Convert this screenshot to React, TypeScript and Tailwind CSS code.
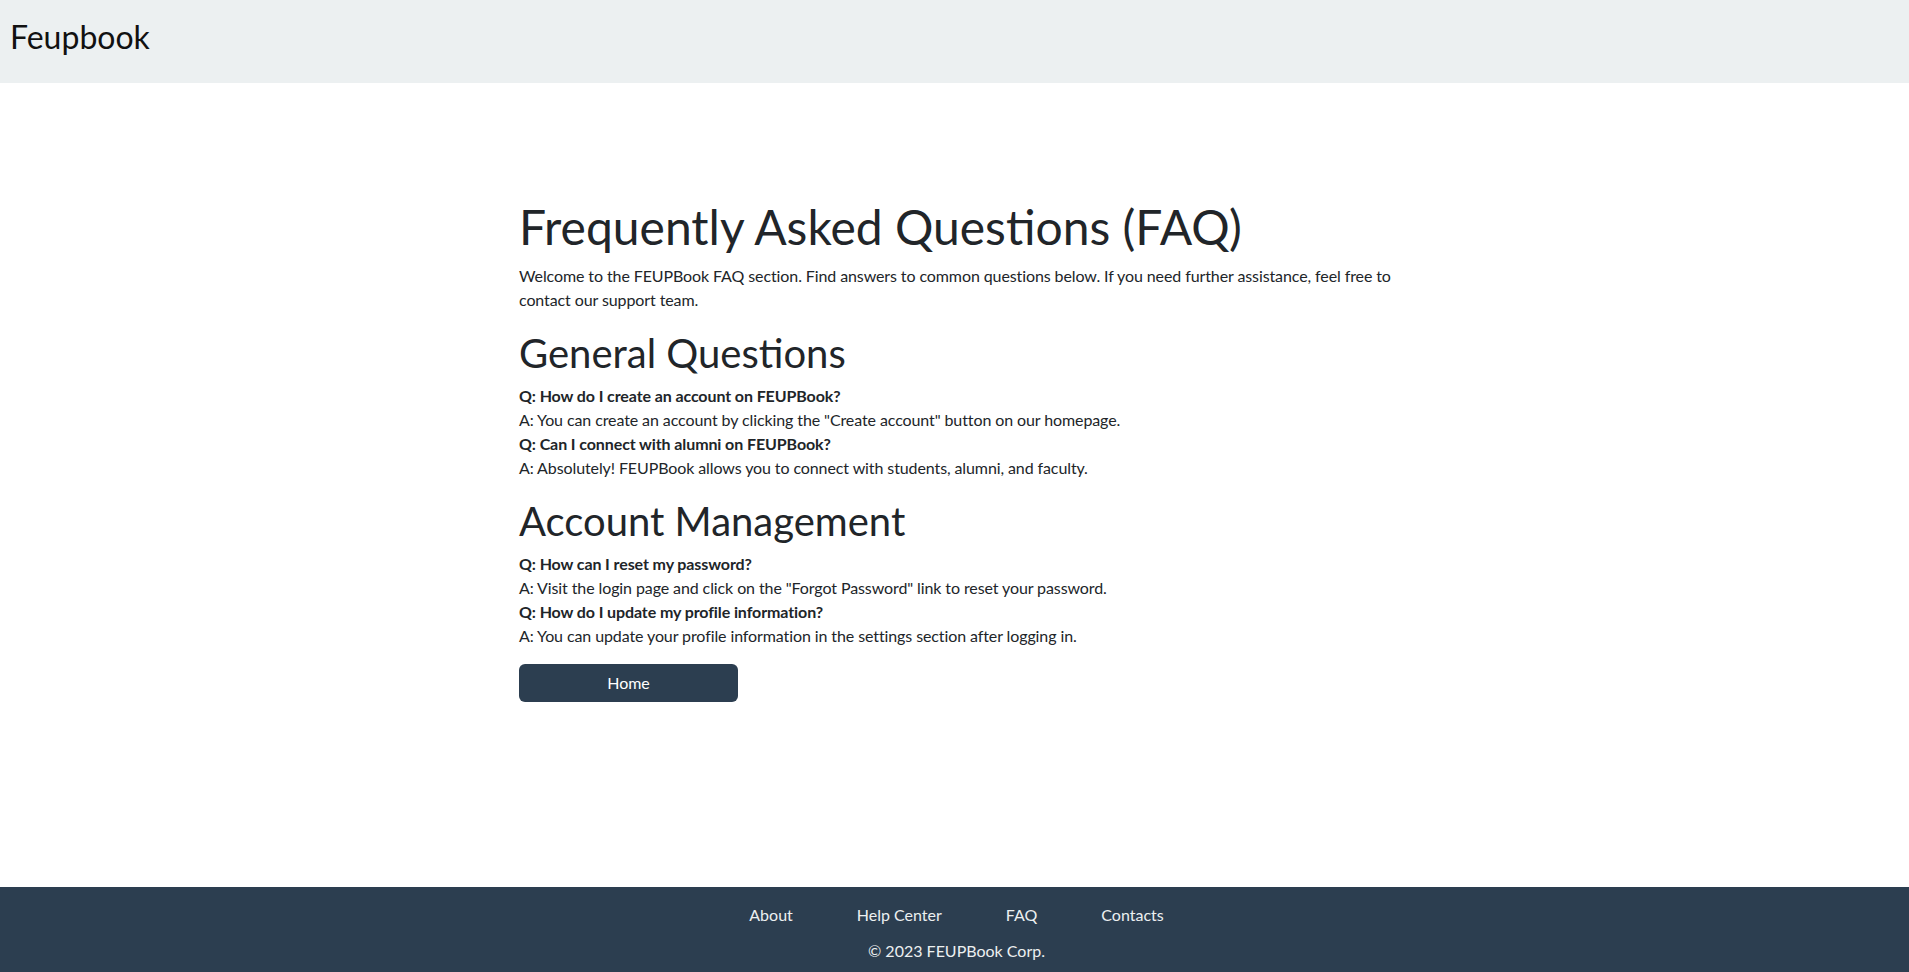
import React from "react";

const font = { fontFamily: "Lato, 'Open Sans', sans-serif" };

function QA({ q, a }: { q: string; a: string }) {
  return (
    <>
      <p className="font-bold leading-6">{q}</p>
      <p className="leading-6">{a}</p>
    </>
  );
}

export default function App() {
  return (
    <div
      className="min-h-screen flex flex-col bg-white text-[#212529] text-[16px]"
      style={font}
    >
      <header className="h-[83px] bg-[#ecf0f1] px-[10px] pt-[13px] shrink-0">
        <span className="text-[32px] leading-[48px] text-[#111]">Feupbook</span>
      </header>

      <main className="flex-1">
        <div className="w-[871px] mx-auto pt-[115px] tracking-[-0.1px]">
          <h1 className="text-[48px] leading-[1.2] mb-[8px] tracking-normal">
            Frequently Asked Questions (FAQ)
          </h1>
          <p className="leading-6 mb-[17px] w-[890px]">
            Welcome to the FEUPBook FAQ section. Find answers to common questions below. If you
            need further assistance, feel free to contact our support team.
          </p>

          <h2 className="text-[40px] leading-[1.2] mb-[7px] tracking-normal">General Questions</h2>
          <div className="mb-[17px]">
            <QA
              q="Q: How do I create an account on FEUPBook?"
              a={'A: You can create an account by clicking the "Create account" button on our homepage.'}
            />
            <QA
              q="Q: Can I connect with alumni on FEUPBook?"
              a="A: Absolutely! FEUPBook allows you to connect with students, alumni, and faculty."
            />
          </div>

          <h2 className="text-[40px] leading-[1.2] mb-[7px] tracking-normal">Account Management</h2>
          <div>
            <QA
              q="Q: How can I reset my password?"
              a={'A: Visit the login page and click on the "Forgot Password" link to reset your password.'}
            />
            <QA
              q="Q: How do I update my profile information?"
              a="A: You can update your profile information in the settings section after logging in."
            />
          </div>

          <button className="mt-[16px] w-[219px] h-[38px] rounded-md bg-[#2c3e50] text-white text-[16px] leading-6 tracking-normal">
            Home
          </button>
        </div>
      </main>

      <footer className="bg-[#2c3e50] text-[#ecf0f1] pt-[16px] pb-[9px] pl-[4px] shrink-0">
        <nav className="flex justify-center">
          <a className="mx-8 leading-6" href="#">About</a>
          <a className="mx-8 leading-6" href="#">Help Center</a>
          <a className="mx-8 leading-6" href="#">FAQ</a>
          <a className="mx-8 leading-6" href="#">Contacts</a>
        </nav>
        <p className="text-center leading-6 mt-[12px]">© 2023 FEUPBook Corp.</p>
      </footer>
    </div>
  );
}
